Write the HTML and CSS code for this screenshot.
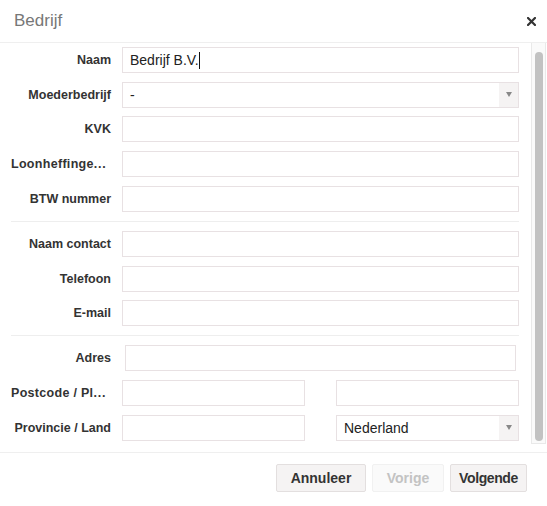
FILE: index.html
```html
<!DOCTYPE html>
<html lang="nl">
<head>
<meta charset="utf-8">
<title>Bedrijf</title>
<link rel="stylesheet" href="styles.css">
</head>
<body>
<div class="modal">
  <header class="modal-head">
    <h1 class="modal-title">Bedrijf</h1>
    <button class="close" type="button" aria-label="Sluiten">
      <svg width="9" height="9" viewBox="0 0 9 9"><path d="M1 1L8 8M8 1L1 8" stroke="#333" stroke-width="2.2" stroke-linecap="square"/></svg>
    </button>
  </header>
  <div class="modal-body">
    <form class="form">
      <div class="group group-first">
        <div class="row"><label class="label">Naam</label><div class="field">Bedrijf B.V.<span class="caret"></span></div></div>
        <div class="row"><label class="label">Moederbedrijf</label><div class="field select"><span class="value">-</span><span class="arrow"></span></div></div>
        <div class="row"><label class="label">KVK</label><div class="field"></div></div>
        <div class="row"><label class="label label-trunc" title="Loonheffingennummer">Loonheffinge<span class="dots">...</span></label><div class="field"></div></div>
        <div class="row"><label class="label">BTW nummer</label><div class="field"></div></div>
      </div>
      <div class="group">
        <div class="row"><label class="label">Naam contact</label><div class="field"></div></div>
        <div class="row"><label class="label">Telefoon</label><div class="field"></div></div>
        <div class="row"><label class="label">E-mail</label><div class="field"></div></div>
      </div>
      <div class="group group-last">
        <div class="row"><label class="label">Adres</label><div class="field field-inset"></div></div>
        <div class="row"><label class="label label-trunc" title="Postcode / Plaats">Postcode / Pl<span class="dots">...</span></label><div class="pair"><div class="field"></div><div class="field"></div></div></div>
        <div class="row"><label class="label">Provincie / Land</label><div class="pair"><div class="field"></div><div class="field select"><span class="value">Nederland</span><span class="arrow"></span></div></div></div>
      </div>
    </form>
    <div class="scrollbar"><div class="thumb"></div></div>
  </div>
  <footer class="modal-foot">
    <button class="btn btn-cancel" type="button">Annuleer</button>
    <button class="btn btn-prev btn-disabled" type="button">Vorige</button>
    <button class="btn btn-next" type="button">Volgende</button>
  </footer>
</div>
</body>
</html>
```
FILE: styles.css
```css
* { box-sizing: border-box; }
html, body { margin: 0; padding: 0; background: #fff; }
body { font-family: "Liberation Sans", Arial, sans-serif; color: #333; }

.modal { width: 547px; height: 506px; display: flex; flex-direction: column; }

.modal-head {
  height: 43px;
  border-bottom: 1px solid #efefef;
  display: flex;
  align-items: center;
  justify-content: space-between;
  padding: 0 11px 0 14px;
}
.modal-title { margin: 0; font-size: 17px; font-weight: normal; color: #777; }
.close { border: 0; background: none; padding: 0; width: 9px; height: 9px; display: flex; margin-top: 1px; }

.modal-body { height: 401px; display: flex; }
.form { flex: 1; padding: 0 12px 0 11px; }

.group { padding: 9px 0 9px; border-bottom: 1px solid #eeeeee; display: flex; flex-direction: column; gap: 8.67px; }
.group-first { padding-top: 4px; padding-bottom: 9.3px; }
.group-last { border-bottom: 0; padding-top: 9px; }

.row { display: grid; grid-template-columns: 100px 1fr; column-gap: 11px; align-items: center; }
.label {
  font-size: 12.5px;
  font-weight: bold;
  color: #333;
  text-align: right;
  white-space: nowrap;
}
.label-trunc { text-align: left; letter-spacing: 0.3px; }
.dots { letter-spacing: 0.8px; margin-left: 0; }
.field {
  height: 26px;
  border: 1px solid #e8e1e3;
  background: #fff;
  padding: 0 7px;
  font-size: 14px;
  line-height: 24px;
  color: #222;
  white-space: nowrap;
}
.field-inset { margin: 0 3px; }
.caret { display: inline-block; width: 1px; height: 17px; background: #111; vertical-align: -4px; margin-left: 0; }

.select { display: flex; padding-right: 0; }
.select .value { flex: 1; }
.arrow {
  width: 19px;
  background: #f5f3f3;
  display: flex;
  align-items: center;
  justify-content: center;
}
.arrow::before {
  content: "";
  border-left: 3.5px solid transparent;
  border-right: 3.5px solid transparent;
  border-top: 5px solid #888;
}

.pair { display: grid; grid-template-columns: 1fr 1fr; column-gap: 31px; }

.scrollbar {
  width: 15px;
  margin-right: 1px;
  background: #fafafa;
  border-left: 1px solid #e9e9e9;
  border-right: 1px solid #e9e9e9;
  border-bottom: 1px solid #e9e9e9;
  padding: 9px 2px 2px 3px;
  display: flex;
}
.thumb { flex: 1; background: #c2c2c2; border-radius: 4px; }

.modal-foot {
  margin-top: 8px;
  border-top: 1px solid #efefef;
  padding: 11px 20px 0 0;
  display: flex;
  justify-content: flex-end;
  gap: 6px;
}
.btn {
  height: 28px;
  padding: 0;
  font-family: "Liberation Sans", Arial, sans-serif;
  font-size: 14px;
  font-weight: bold;
  color: #333;
  background: #f5f3f3;
  border: 1px solid #e3dfdf;
  border-radius: 2px;
  text-align: center;
}
.btn-cancel { width: 90px; }
.btn-prev { width: 72px; }
.btn-next { width: 77px; letter-spacing: -0.4px; }
.btn-disabled { color: #c3c3c3; background: #fafafa; border-color: #f1f1f1; }
```
